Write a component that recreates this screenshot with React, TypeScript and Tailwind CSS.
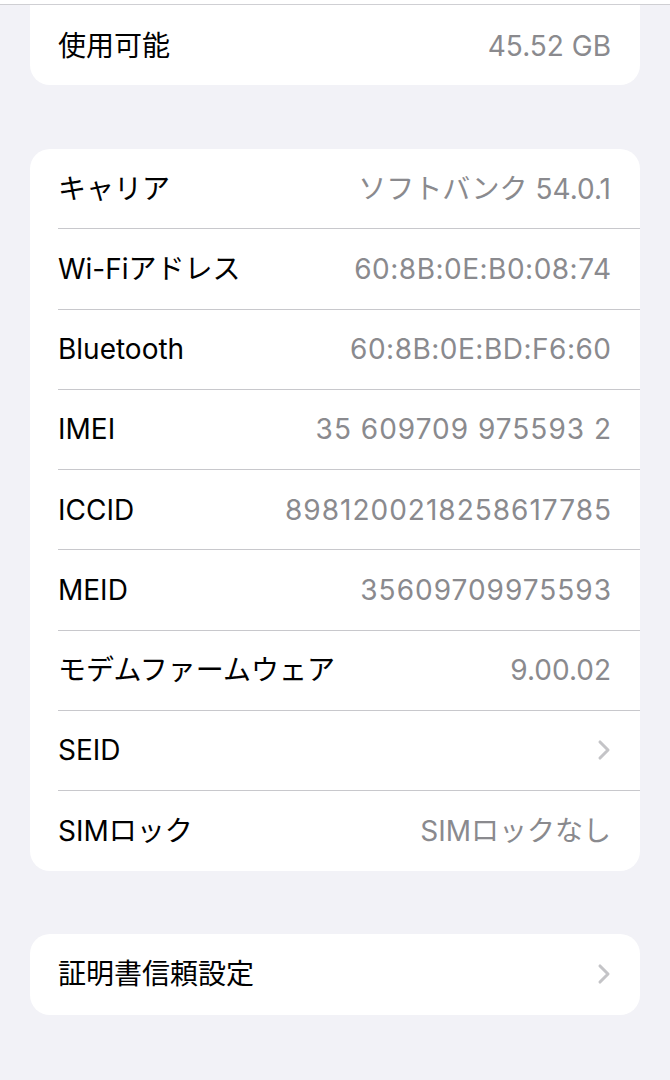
import { ChevronRight } from "lucide-react";

type Row = {
  label: string;
  value?: string;
  spacing?: string;
  chevron?: boolean;
};

const rows: Row[] = [
  { label: "キャリア", value: "ソフトバンク 54.0.1" },
  { label: "Wi-Fiアドレス", value: "60:8B:0E:B0:08:74", spacing: "tracking-[0.5px] -mr-[0.5px]" },
  { label: "Bluetooth", value: "60:8B:0E:BD:F6:60", spacing: "tracking-[0.5px] -mr-[0.5px]" },
  { label: "IMEI", value: "35 609709 975593 2", spacing: "tracking-[1px] -mr-[1px]" },
  { label: "ICCID", value: "8981200218258617785", spacing: "tracking-[1px] -mr-[1px]" },
  { label: "MEID", value: "35609709975593", spacing: "tracking-[1px] -mr-[1px]" },
  { label: "モデムファームウェア", value: "9.00.02" },
  { label: "SEID", chevron: true },
  { label: "SIMロック", value: "SIMロックなし" },
];

const font = "font-['Inter','Noto_Sans_CJK_JP',sans-serif]";

function SettingRow({ row, last }: { row: Row; last?: boolean }) {
  return (
    <div className="flex h-[80.25px] items-stretch pl-[28px]">
      <div
        className={`flex flex-1 items-center justify-between pr-[29px] ${
          last ? "" : "border-b border-[#c8c8cc]"
        }`}
      >
        <span className="text-[28px] leading-none text-black">{row.label}</span>
        {row.chevron ? (
          <ChevronRight size={32} strokeWidth={2.3} className="-mr-[9px] text-[#c4c4c7]" />
        ) : (
          <span className={`text-[28px] leading-none text-[#8a8a8e] ${row.spacing ?? ""}`}>
            {row.value}
          </span>
        )}
      </div>
    </div>
  );
}

export default function App() {
  return (
    <div className={`min-h-screen bg-[#f2f2f7] pb-10 ${font}`}>
      {/* cut-off nav edge */}
      <div className="h-[4px] bg-white" />
      <div className="h-px bg-[#cfcfd3]" />

      {/* storage card (top cut off) */}
      <div className="mx-[30px] rounded-b-[20px] bg-white">
        <div className="flex h-[80px] items-center justify-between pl-[28px] pr-[29px] pt-px">
          <span className="text-[28px] leading-none text-black">使用可能</span>
          <span className="text-[28px] leading-none text-[#8a8a8e]">45.52 GB</span>
        </div>
      </div>

      {/* device info */}
      <div className="mx-[30px] mt-[64px] overflow-hidden rounded-[20px] bg-white">
        {rows.map((r, i) => (
          <SettingRow key={r.label} row={r} last={i === rows.length - 1} />
        ))}
      </div>

      {/* certificates */}
      <div className="mx-[30px] mt-[63px] rounded-[20px] bg-white">
        <SettingRow row={{ label: "証明書信頼設定", chevron: true }} last />
      </div>
    </div>
  );
}
